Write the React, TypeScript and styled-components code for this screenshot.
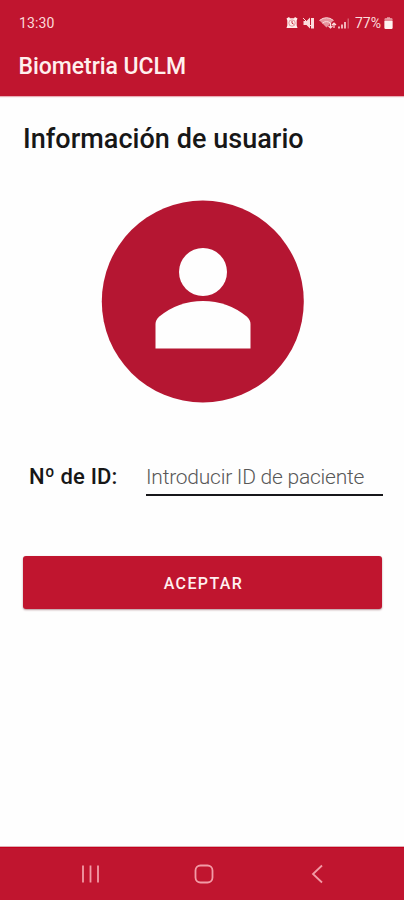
import React from 'react';
import styled, { createGlobalStyle } from 'styled-components';

const crimson = '#c0152f';

const GlobalStyle = createGlobalStyle`
  * { box-sizing: border-box; }
  body { margin: 0; background: #fefefe; font-family: Roboto, "Liberation Sans", sans-serif; }
`;

const Screen = styled.div`
  display: flex;
  flex-direction: column;
  height: 900px;
  background: #fefefe;
`;

const Header = styled.header`
  height: 96px;
  flex: none;
  background: ${crimson};
  box-shadow: 0 1px 1px rgba(192, 21, 47, 0.35);
  color: #fff0ee;
`;

const StatusBar = styled.div`
  display: flex;
  align-items: center;
  justify-content: space-between;
  height: 46px;
  padding: 0 11px 0 19px;
`;

const Clock = styled.span`
  font-size: 14px;
  line-height: 16px;
  letter-spacing: 0.1px;
  color: #fbd9d9;
`;

const StatusIcons = styled.div`
  display: flex;
  align-items: center;
  color: #fbdcdc;
`;

const IconPair = styled.div`
  display: flex;
  gap: 3px;
  margin-right: 3px;
`;

const Battery = styled.span`
  width: 28px;
  margin: 0 1px 0 5px;
  font-size: 14px;
  line-height: 16px;
  letter-spacing: 0;
  white-space: nowrap;
`;

const AppTitle = styled.h1`
  margin: 6px 0 0 18.5px;
  font-size: 23px;
  line-height: 30px;
  font-weight: 500;
  letter-spacing: -0.05px;
`;

const Content = styled.main`
  display: flex;
  flex-direction: column;
  flex: 1;
  padding: 27px 21px 0 23px;
  color: #171717;
`;

const Heading = styled.h2`
  margin: 0;
  font-size: 27px;
  line-height: 32px;
  font-weight: 500;
  letter-spacing: 0.04px;
  white-space: nowrap;
`;

const Avatar = styled.svg`
  display: block;
  width: 204px;
  height: 204px;
  margin: 45px 0 0 78px;
`;

const FieldRow = styled.div`
  display: flex;
  height: 36px;
  margin-top: 56px;
`;

const Label = styled.label`
  flex: none;
  width: 122px;
  padding-left: 6px;
  font-size: 22px;
  line-height: 34px;
  font-weight: 500;
  letter-spacing: 0.15px;
  white-space: nowrap;
`;

const Input = styled.input`
  flex: none;
  width: 237px;
  height: 36px;
  margin-left: 1px;
  padding: 0;
  border: 0;
  border-bottom: 2px solid #17171a;
  outline: 0;
  background: transparent;
  color: #333;
  font: 300 21px Roboto, sans-serif;
  letter-spacing: -0.24px;

  &::placeholder { color: #585858; opacity: 1; }
`;

const AcceptButton = styled.button`
  height: 53px;
  margin: 60px 0 0;
  width: 359px;
  padding: 1px 0 0 2px;
  border: 0;
  border-radius: 3px;
  background: ${crimson};
  box-shadow: 0 1px 2px rgba(90, 20, 30, 0.45);
  color: #fff0f0;
  font: 500 16px Roboto, sans-serif;
  letter-spacing: 1.4px;
`;

const NavBar = styled.nav`
  display: flex;
  align-items: center;
  justify-content: space-between;
  flex: none;
  height: 53px;
  padding: 0 75px 0 77px;
  background: ${crimson};
  border-top: 1px solid #c5001e;
  box-shadow: 0 -1px 0 #deb0b5;
`;

const NavButton = styled.button`
  display: flex;
  padding: 0;
  border: 0;
  background: none;
  color: #f29ba6;
`;

const AlarmIcon = () => (
  <svg width="14" height="14" viewBox="0 0 14 14">
    <path d="M1.5 2.5 4 1l1 1.2h4L10 1l2.5 1.5-.8 2v5l.8 2.5h-11l.8-2.5v-5z" fill="#ffeeec" />
    <path d="M7 4.800v2.400l1.700 1" fill="none" stroke={crimson} strokeWidth=".9" />
    <circle cx="7" cy="7" r="3.200" fill="none" stroke={crimson} strokeWidth=".4" />
  </svg>
);

const MuteIcon = () => (
  <svg width="14" height="14" viewBox="0 0 14 14">
    <path d="M1.500 5h3L8 1.500v11L4.500 9h-3zM9 2h3v10.500H9z" fill="currentColor" />
    <path d="m2 3 9 9" stroke={crimson} strokeWidth=".6" />
    <path d="m1 2 10 10" stroke="currentColor" strokeWidth="1" />
  </svg>
);

const WifiIcon = () => (
  <svg width="18" height="14" viewBox="0 0 18 14">
    <path d="M.5 4.400Q7.500-1 14.500 4.400L7.500 11.500z" fill="currentColor" opacity=".65" />
    <path d="M.5 4.400Q7.500-1 14.500 4.400M3.400 7.200q4.100-3.300 8.200 0" fill="none" stroke="currentColor" strokeWidth="1" />
    <path d="M11.500 7v5m-2-2 2 2 2-2m1.500 2V7m-2 2 2-2 2 2" fill="none" stroke="currentColor" strokeWidth="1.200" />
  </svg>
);

const SignalIcon = () => (
  <svg width="13" height="14" viewBox="0 0 13 14">
    <path d="M1 10.500h2v2H1zM4 8.500h2v4H4zM7 6h2v6.500H7z" fill="currentColor" opacity=".8" />
    <path d="M10.500 2.500H12v10h-1.500z" fill="currentColor" opacity=".35" />
  </svg>
);

const BatteryIcon = () => (
  <svg width="9" height="14" viewBox="0 0 9 14">
    <path d="M3 1h3v1.5H3z" fill="currentColor" opacity=".5" />
    <rect x=".5" y="2" width="8" height="11" rx="1.3" fill="currentColor" opacity=".6" />
    <path d="M.5 5h8v6.7Q8.5 13 7.2 13H1.8Q.5 13 .5 11.7z" fill="#fff3f1" />
  </svg>
);

export default function App() {
  return (
    <Screen>
      <GlobalStyle />
      <Header>
        <StatusBar>
          <Clock>13:30</Clock>
          <StatusIcons>
            <IconPair>
              <AlarmIcon />
              <MuteIcon />
            </IconPair>
            <WifiIcon />
            <SignalIcon />
            <Battery>77%</Battery>
            <BatteryIcon />
          </StatusIcons>
        </StatusBar>
        <AppTitle>Biometria UCLM</AppTitle>
      </Header>
      <Content>
        <Heading>Información de usuario</Heading>
        <Avatar viewBox="0 0 204 204">
          <circle cx="101.8" cy="101.5" r="101" fill="#b51632" />
          <circle cx="102" cy="72" r="24" fill="#fefefe" />
          <path d="M54.500 148.500V124Q54.500 120 58 116.800Q77 101 102 101T146 116.800Q149.500 120 149.500 124V148.500Z" fill="#fefefe" />
        </Avatar>
        <FieldRow>
          <Label htmlFor="patient">Nº de ID:</Label>
          <Input id="patient" placeholder="Introducir ID de paciente" />
        </FieldRow>
        <AcceptButton>ACEPTAR</AcceptButton>
      </Content>
      <NavBar>
        <NavButton aria-label="Recientes">
          <svg width="27" height="24" viewBox="0 0 27 24" stroke="currentColor" strokeWidth="1.8">
            <path d="M6 3.500v17M13.500 3.500v17M21 3.500v17" />
          </svg>
        </NavButton>
        <NavButton aria-label="Inicio">
          <svg width="24" height="24" viewBox="0 0 24 24" fill="none" stroke="currentColor" strokeWidth="1.8">
            <rect x="2.500" y="3.500" width="17" height="17" rx="5" />
          </svg>
        </NavButton>
        <NavButton aria-label="Atrás">
          <svg width="24" height="24" viewBox="0 0 24 24" fill="none" stroke="currentColor" strokeWidth="1.8">
            <path d="m17 3.500-9 8.500 9 8.500" />
          </svg>
        </NavButton>
      </NavBar>
    </Screen>
  );
}
